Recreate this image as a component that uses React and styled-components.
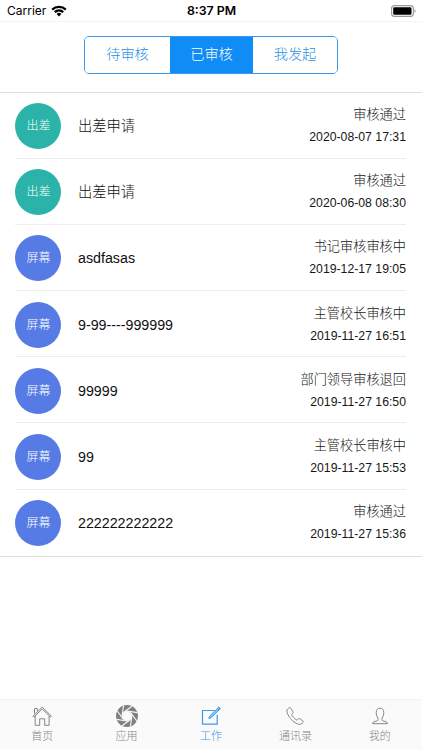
import React from "react";
import styled, { createGlobalStyle } from "styled-components";

const GlobalStyle = createGlobalStyle`
  * { box-sizing: border-box; }
  body {
    margin: 0;
    background: #fff;
    font-family: "Liberation Sans", "Noto Sans CJK SC", sans-serif;
    font-weight: 300;
  }
  button { font: inherit; border: 0; padding: 0; background: none; }
`;

const Screen = styled.div`
  width: 422px;
  height: 750px;
  display: flex;
  flex-direction: column;
  background: #fff;
  overflow: hidden;
`;

const StatusBar = styled.header`
  height: 22px;
  flex: none;
  display: grid;
  grid-template-columns: 1fr auto 1fr;
  align-items: center;
  padding: 0 6px 0 7px;
  border-bottom: 1px solid #f4f4f4;
  font-family: Inter, sans-serif;
  color: #000;
  line-height: 20px;
`;

const Carrier = styled.div`
  display: flex;
  align-items: center;
  gap: 5px;
  font-size: 12px;
  font-weight: 400;
`;

const Clock = styled.div`
  font-size: 12.3px;
  font-weight: 600;
`;

const BatterySlot = styled.div`
  display: flex;
  justify-content: flex-end;
`;

const Toolbar = styled.div`
  height: 71px;
  flex: none;
  display: flex;
  justify-content: center;
  padding-top: 14px;
  border-bottom: 1px solid #dedede;
`;

const Segments = styled.div`
  width: 254px;
  height: 38px;
  display: grid;
  grid-template-columns: 85px 83px 1fr;
  border: 1px solid #3d98e8;
  border-radius: 5px;
  overflow: hidden;
`;

const Segment = styled.button`
  font-size: 14.2px;
  line-height: 34px;
  padding-bottom: 2px;
  color: ${(p) => (p.$active ? "#fff" : "#2d8fe4")};
  background: ${(p) => (p.$active ? "#0f8cf6" : "#fff")};
`;

const List = styled.ul`
  list-style: none;
  margin: 0;
  padding: 0 0 0 15.4px;
  border-bottom: 1px solid #dedede;
`;

const Row = styled.li`
  height: 66.1px;
  display: flex;
  align-items: center;
  padding-right: 16px;
`;

const RowBody = styled.div`
  flex: 1;
  height: 100%;
  display: flex;
  align-items: center;
  padding-top: 1.4px;
  border-bottom: 1px solid ${(p) => (p.$last ? "transparent" : "#ececec")};
`;

const Badge = styled.div`
  width: 46px;
  height: 46px;
  flex: none;
  border-radius: 50%;
  background: ${(p) => p.$color};
  color: #fff;
  font-size: 12px;
  line-height: 46px;
  text-align: center;
`;

const Title = styled.div`
  flex: 1;
  margin-left: 16.6px;
  color: #101010;
  font-size: 14.25px;
  line-height: 22px;
`;

const Meta = styled.div`
  display: flex;
  flex-direction: column;
  align-items: flex-end;
  color: #161616;
`;

const Status = styled.div`
  font-size: 13.2px;
  line-height: 22px;
`;

const Time = styled.time`
  font-size: 12.25px;
  line-height: 22px;
`;

const TabBar = styled.nav`
  height: 51px;
  flex: none;
  margin-top: auto;
  display: grid;
  grid-template-columns: repeat(5, 1fr);
  background: #fafafa;
  border-top: 1px solid #f3f3f3;
`;

const Tab = styled.button`
  display: flex;
  flex-direction: column;
  align-items: center;
  padding-top: 4px;
  color: ${(p) => (p.$active ? "#3d98ea" : "#868686")};
  svg { display: block; }
`;

const TabLabel = styled.span`
  font-size: 11px;
  line-height: 16px;
`;

const WifiIcon = () => (
  <svg width="16" height="12" viewBox="0 0 16 12">
    <path d="M.4 3.7a11 11 0 0 1 15.2 0L14 5.4a8.7 8.7 0 0 0-12 0z" />
    <path d="M3 6.3a7.2 7.2 0 0 1 10 0L11.4 8a5 5 0 0 0-6.8 0z" />
    <path d="M5.6 8.9a3.5 3.5 0 0 1 4.8 0L8 11.4z" />
  </svg>
);

const BatteryIcon = () => (
  <svg width="25" height="12" viewBox="0 0 25 12">
    <rect x=".6" y=".6" width="21.8" height="10.8" rx="3" fill="none" stroke="#999" strokeWidth="1.1" />
    <rect x="2.2" y="2.2" width="18.3" height="7.6" rx="1.3" />
    <path d="M23.6 4.2c1.2.5 1.2 3.1 0 3.6z" fill="#777" />
  </svg>
);

const line = { fill: "none", stroke: "currentColor", strokeWidth: 1 };

const HomeIcon = () => (
  <svg width="24" height="24" viewBox="0 0 24 24" {...line}>
    <path d="M3 12.2 12.2 3l9.2 9.2-1 .9-8.2-8.2-8.3 8.2zM4.5 9.7V4.5h2.8v2.7M5.2 12v9.3h4.5v-6.5h5v6.5h4.4V12" />
  </svg>
);

const blades = [0, 45, 90, 135, 180, 225, 270, 315];

const ApertureIcon = () => (
  <svg width="24" height="24" viewBox="0 0 24 24">
    <circle cx="12" cy="12" r="8" fill="none" stroke="#808080" strokeWidth="6" />
    {blades.map((a) => (
      <path key={a} d="M8.5 8.5 17 2.2" stroke="#fafafa" strokeWidth="1.1" transform={`rotate(${a} 12 12)`} />
    ))}
  </svg>
);

const EditIcon = () => (
  <svg width="24" height="24" viewBox="0 0 24 24" {...line}>
    <path d="M15.5 6.5h-12v13.7h14.7v-9.5" strokeWidth="1.2" />
    <path d="m9.7 14.5 1.1-2.6 7.7-7.4 1.5 1.5-7.7 7.5z" fill="#8fc7fa" />
    <path d="m18.7 4.3 1-1 1.4 1.5-1 1" strokeWidth="1.2" />
  </svg>
);

const PhoneIcon = () => (
  <svg width="24" height="24" viewBox="0 0 24 24" {...line}>
    <path d="M6.5 3.8c-1 .1-2.8 1.8-2.7 3.2.3 3.7 5.4 11.5 11.5 13.2 2.1.5 3.5-.3 4.7-1.7.5-.7.4-1.2-.2-1.7l-2.7-2c-.7-.5-1.3-.3-1.9.2l-.8.8c-.5.4-1 .3-1.5-.1-1.8-1.4-3-2.8-4-4.5-.3-.6-.2-1 .2-1.3l.6-.5c.6-.5.6-1 .3-1.6L8 4.5c-.4-.6-.8-.8-1.5-.7z" />
  </svg>
);

const PersonIcon = () => (
  <svg width="24" height="24" viewBox="0 0 24 24" {...line}>
    <path d="M10 14.2C8.9 12.6 8.2 10.5 8.2 8.5c0-2.7 1.4-4.3 3.8-4.3s3.8 1.6 3.8 4.3c0 2-.7 4.1-1.8 5.7v1.5c0 .7.4 1 1 1.2l3.2 1c.9.3 1.3.9 1.3 1.8H4.5c0-.9.4-1.5 1.3-1.8l3.2-1c.6-.2 1-.5 1-1.2z" />
  </svg>
);

const TEAL = "#2bb3a9";
const BLUE = "#567be4";

const items = [
  { tag: "出差", color: TEAL, title: "出差申请", status: "审核通过", time: "2020-08-07 17:31" },
  { tag: "出差", color: TEAL, title: "出差申请", status: "审核通过", time: "2020-06-08 08:30" },
  { tag: "屏幕", color: BLUE, title: "asdfasas", status: "书记审核审核中", time: "2019-12-17 19:05" },
  { tag: "屏幕", color: BLUE, title: "9-99----999999", status: "主管校长审核中", time: "2019-11-27 16:51" },
  { tag: "屏幕", color: BLUE, title: "99999", status: "部门领导审核退回", time: "2019-11-27 16:50" },
  { tag: "屏幕", color: BLUE, title: "99", status: "主管校长审核中", time: "2019-11-27 15:53" },
  { tag: "屏幕", color: BLUE, title: "222222222222", status: "审核通过", time: "2019-11-27 15:36" },
];

const tabs = [
  { label: "首页", Icon: HomeIcon },
  { label: "应用", Icon: ApertureIcon },
  { label: "工作", Icon: EditIcon, active: true },
  { label: "通讯录", Icon: PhoneIcon },
  { label: "我的", Icon: PersonIcon },
];

export default function App() {
  return (
    <Screen lang="zh-CN">
      <GlobalStyle />
      <StatusBar>
        <Carrier>Carrier <WifiIcon /></Carrier>
        <Clock>8:37 PM</Clock>
        <BatterySlot><BatteryIcon /></BatterySlot>
      </StatusBar>
      <Toolbar>
        <Segments>
          <Segment>待审核</Segment>
          <Segment $active>已审核</Segment>
          <Segment>我发起</Segment>
        </Segments>
      </Toolbar>
      <List>
        {items.map((item, i) => (
          <Row key={i}>
            <RowBody $last={i === items.length - 1}>
              <Badge $color={item.color}>{item.tag}</Badge>
              <Title>{item.title}</Title>
              <Meta>
                <Status>{item.status}</Status>
                <Time>{item.time}</Time>
              </Meta>
            </RowBody>
          </Row>
        ))}
      </List>
      <TabBar>
        {tabs.map(({ label, Icon, active }) => (
          <Tab key={label} $active={active}>
            <Icon />
            <TabLabel>{label}</TabLabel>
          </Tab>
        ))}
      </TabBar>
    </Screen>
  );
}
